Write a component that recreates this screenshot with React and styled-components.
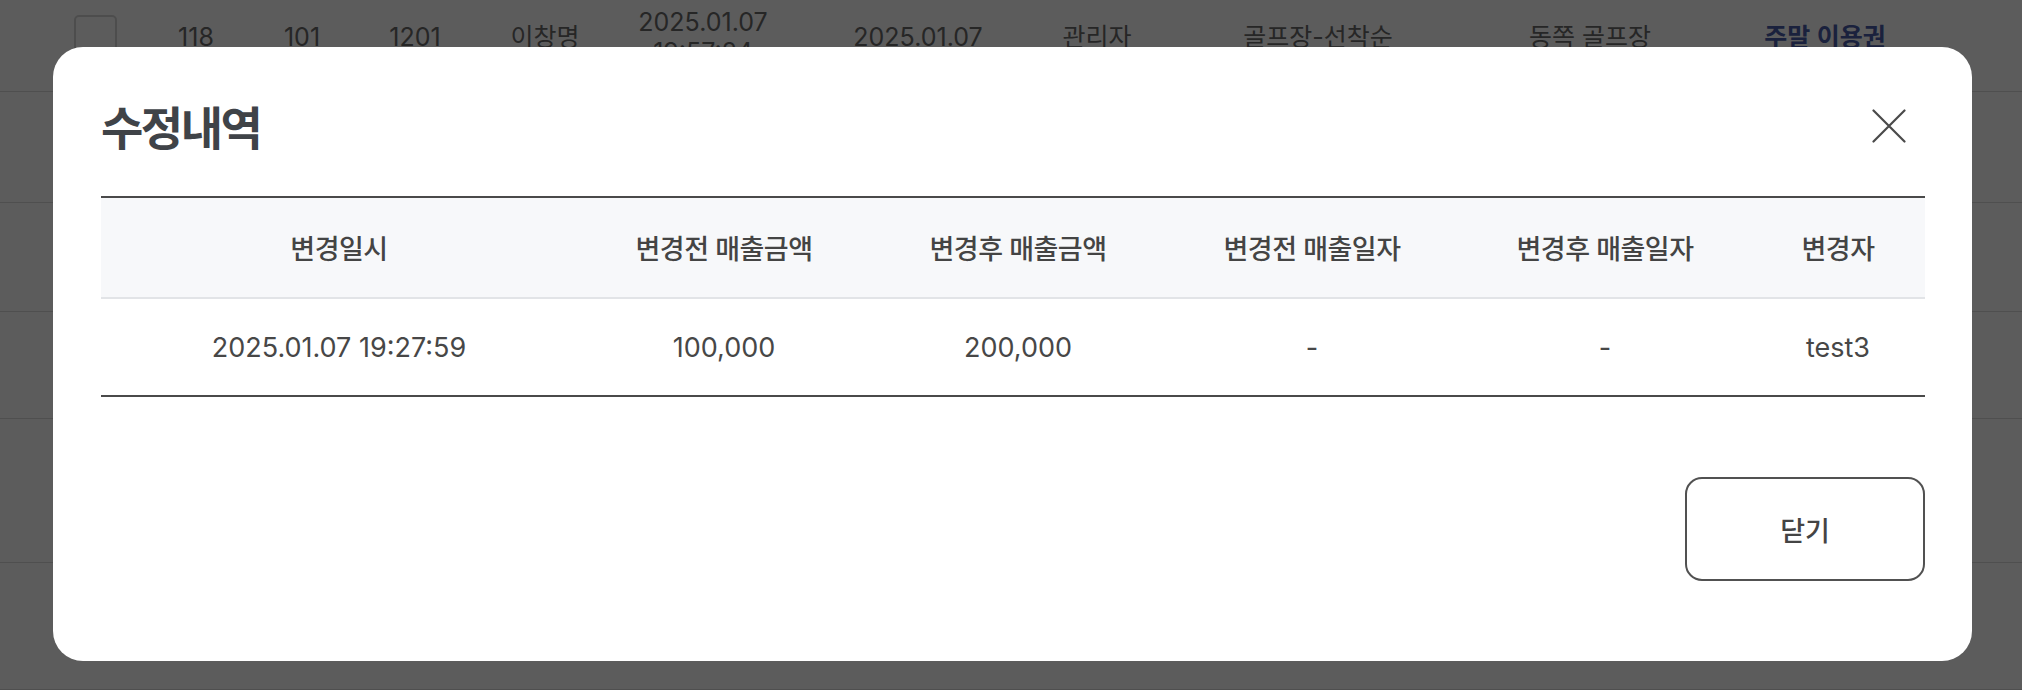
import React from "react";
import styled, { createGlobalStyle } from "styled-components";

const Global = createGlobalStyle`
  html, body { margin: 0; padding: 0; background: #ffffff; overflow: hidden; }
  body { font-family: "Inter", "Noto Sans CJK KR", sans-serif; color: #444; }
  * { box-sizing: border-box; }
`;

/* ---------- background page (list behind the dialog) ---------- */
const Page = styled.div`
  width: 2022px;
  margin-top: -18px;
`;

const ListRow = styled.div`
  display: grid;
  grid-template-columns: 70px 132px 80px 146px 114px 202px 228px 130px 312px 232px 238px 1fr;
  padding-left: 60px;
  height: ${(p) => p.$h}px;
  align-items: center;
  border-bottom: 1px solid #dcdcdc;
  font-size: 25px;
  color: #6a6a6a;
`;

const Cell = styled.div`
  text-align: center;
  white-space: nowrap;
  line-height: 30px;
  color: ${(p) => (p.$link ? "#4a5ca8" : "inherit")};
  font-weight: ${(p) => (p.$link ? 600 : 400)};
`;

const CheckBox = styled.span`
  display: block;
  width: 43px;
  height: 43px;
  margin: 0 auto;
  border: 2px solid #d6d6d6;
  border-radius: 5px;
  background: #fff;
`;

/* ---------- dialog ---------- */
const Overlay = styled.div`
  position: fixed;
  inset: 0;
  background: rgba(0, 0, 0, 0.64);
  display: flex;
  align-items: flex-start;
  padding: 47px 0 0 53px;
`;

const Dialog = styled.div`
  width: 1919px;
  height: 614px;
  background: #fff;
  border-radius: 30px;
  padding: 52px 47px 0 48px;
  display: flex;
  flex-direction: column;
`;

const Header = styled.div`
  display: flex;
  justify-content: space-between;
  align-items: flex-start;
  height: 60px;
`;

const Title = styled.h2`
  margin: 0;
  font-family: "Noto Sans CJK KR", sans-serif;
  font-size: 46px;
  line-height: 52px;
  font-weight: 700;
  letter-spacing: -2.5px;
  color: #3f4348;
`;

const CloseButton = styled.button`
  width: 72px;
  height: 54px;
  padding: 0;
  border: 0;
  background: transparent;
  display: flex;
  align-items: center;
  justify-content: center;
  cursor: pointer;
`;

const Table = styled.table`
  margin-top: 37px;
  width: 100%;
  border-collapse: collapse;
  table-layout: fixed;
  border-top: 2px solid #4a4a4a;
  border-bottom: 2px solid #4a4a4a;
`;

const Th = styled.th`
  height: 101px;
  background: #f7f8fa;
  border-bottom: 2px solid #e2e4e7;
  font-size: 27px;
  font-weight: 500;
  letter-spacing: -0.5px;
  color: #444;
  text-align: center;
  padding: 0;
`;

const Td = styled.td`
  height: 98px;
  font-size: 27px;
  font-weight: 400;
  color: #474747;
  text-align: center;
  padding: 0;
`;

const Footer = styled.div`
  display: flex;
  justify-content: flex-end;
  margin-top: 80px;
`;

const CloseAction = styled.button`
  width: 240px;
  height: 104px;
  border: 2px solid #515151;
  border-radius: 17px;
  background: #fff;
  font-family: "Noto Sans CJK KR", sans-serif;
  font-size: 27px;
  font-weight: 500;
  color: #444;
  cursor: pointer;
`;

const columns = [
  { label: "변경일시", w: 476 },
  { label: "변경전 매출금액", w: 294 },
  { label: "변경후 매출금액", w: 294 },
  { label: "변경전 매출일자", w: 294 },
  { label: "변경후 매출일자", w: 292 },
  { label: "변경자", w: 174 },
];

const row = ["2025.01.07 19:27:59", "100,000", "200,000", "-", "-", "test3"];

const rowHeights = [110, 111, 109, 107, 144, 127];

export default function App() {
  return (
    <>
      <Global />
      <Page>
        <ListRow $h={rowHeights[0]}>
          <Cell><CheckBox /></Cell>
          <Cell>118</Cell>
          <Cell>101</Cell>
          <Cell>1201</Cell>
          <Cell>이창명</Cell>
          <Cell>2025.01.07<br />19:57:24</Cell>
          <Cell>2025.01.07</Cell>
          <Cell>관리자</Cell>
          <Cell>골프장-선착순</Cell>
          <Cell>동쪽 골프장</Cell>
          <Cell $link>주말 이용권</Cell>
          <Cell />
        </ListRow>
        {rowHeights.slice(1).map((h, i) => (
          <ListRow key={i} $h={h} />
        ))}
      </Page>

      <Overlay>
        <Dialog role="dialog" aria-label="수정내역">
          <Header>
            <Title>수정내역</Title>
            <CloseButton aria-label="닫기">
              <svg width="34" height="34" viewBox="0 0 34 34" fill="none">
                <path d="M1.5 1.5 L32.5 32.5 M32.5 1.5 L1.5 32.5" stroke="#4a4a4a" strokeWidth="2.2" strokeLinecap="round" />
              </svg>
            </CloseButton>
          </Header>
          <Table>
            <colgroup>
              {columns.map((c) => (
                <col key={c.label} style={{ width: c.w }} />
              ))}
            </colgroup>
            <thead>
              <tr>
                {columns.map((c) => (
                  <Th key={c.label}>{c.label}</Th>
                ))}
              </tr>
            </thead>
            <tbody>
              <tr>
                {row.map((v, i) => (
                  <Td key={i}>{v}</Td>
                ))}
              </tr>
            </tbody>
          </Table>
          <Footer>
            <CloseAction>닫기</CloseAction>
          </Footer>
        </Dialog>
      </Overlay>
    </>
  );
}
